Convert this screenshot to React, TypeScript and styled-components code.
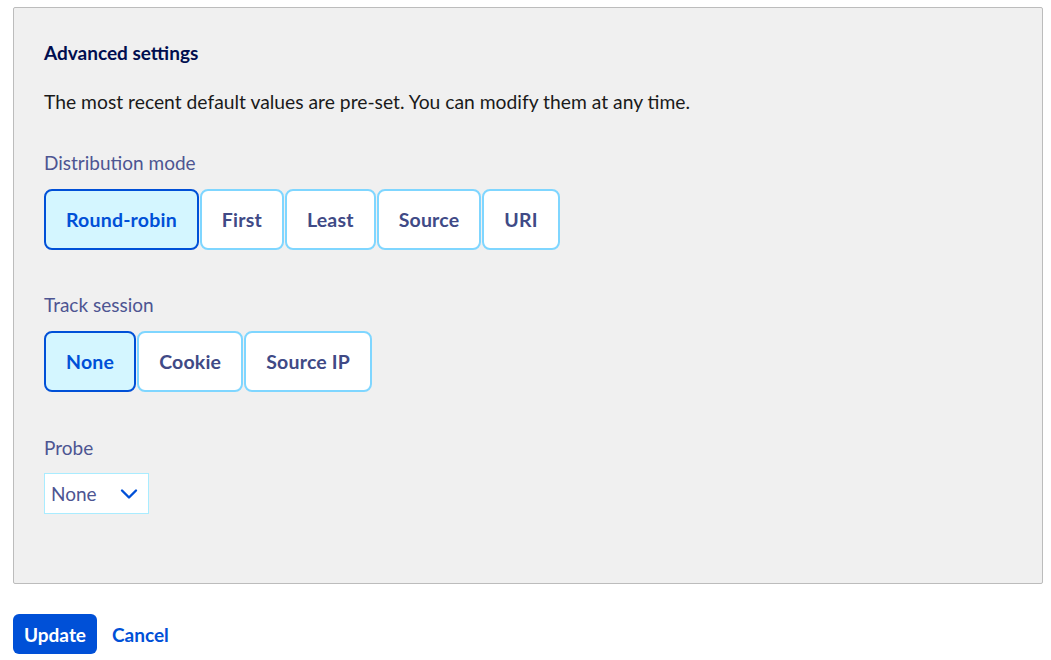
import { useState } from "react"
import styled, { createGlobalStyle } from "styled-components"

const GlobalStyle = createGlobalStyle`
  body {
    margin: 0;
    background: #ffffff;
    font-family: "Lato", "Open Sans", sans-serif;
  }
`

const Page = styled.div`
  padding: 7px 8px 0 13px;
`

const Panel = styled.section`
  background: #f0f0f0;
  border: 1px solid #bcbcbc;
  border-radius: 2px;
  padding: 33px 30px 69px 30px;
`

const Heading = styled.h4`
  margin: 0;
  font-size: 19px;
  line-height: 24px;
  font-weight: 700;
  color: #000e4f;
`

const Intro = styled.p`
  margin: 25px 0 0;
  font-size: 19.3px;
  line-height: 24px;
  color: #1a1a1a;
`

const Label = styled.div<{ $top: number }>`
  margin-top: ${(p) => p.$top}px;
  font-size: 19px;
  line-height: 24px;
  color: #4d5592;
`

const Tiles = styled.div`
  display: flex;
  gap: 1px;
  margin-top: 14px;
`

const Tile = styled.button<{ $active: boolean }>`
  height: 61px;
  padding: 0 20px;
  border-radius: 8px;
  border: 2px solid ${(p) => (p.$active ? "#0050d7" : "#7fd6ff")};
  background: ${(p) => (p.$active ? "#d4f6ff" : "#ffffff")};
  color: ${(p) => (p.$active ? "#0050d7" : "#404a86")};
  font-family: inherit;
  font-size: 19.5px;
  font-weight: 700;
  letter-spacing: 0.2px;
  cursor: pointer;
`

const SelectBox = styled.div`
  margin-top: 13px;
  width: 105px;
  height: 41px;
  box-sizing: border-box;
  border: 1px solid #a9ecff;
  background: #ffffff;
  display: flex;
  align-items: center;
  justify-content: space-between;
  padding: 0 10px 0 6px;
  font-size: 19px;
  color: #4d5592;
`

const Actions = styled.div`
  display: flex;
  align-items: center;
  gap: 15px;
  margin-top: 30px;
`

const Primary = styled.button`
  height: 40px;
  padding: 0 11px;
  border: none;
  border-radius: 6px;
  background: #0050d7;
  color: #ffffff;
  font-family: inherit;
  font-size: 19px;
  font-weight: 700;
`

const Link = styled.button`
  border: none;
  background: none;
  padding: 0;
  color: #0050d7;
  font-family: inherit;
  font-size: 19px;
  font-weight: 700;
`

const modes = ["Round-robin", "First", "Least", "Source", "URI"]
const sessions = ["None", "Cookie", "Source IP"]

const App = () => {
  const [mode, setMode] = useState("Round-robin")
  const [session, setSession] = useState("None")

  return (
    <Page>
      <GlobalStyle />
      <Panel>
        <Heading>Advanced settings</Heading>
        <Intro>The most recent default values are pre-set. You can modify them at any time.</Intro>

        <Label $top={37}>Distribution mode</Label>
        <Tiles>
          {modes.map((m) => (
            <Tile key={m} $active={m === mode} onClick={() => setMode(m)}>
              {m}
            </Tile>
          ))}
        </Tiles>

        <Label $top={43}>Track session</Label>
        <Tiles>
          {sessions.map((s) => (
            <Tile key={s} $active={s === session} onClick={() => setSession(s)}>
              {s}
            </Tile>
          ))}
        </Tiles>

        <Label $top={44}>Probe</Label>
        <SelectBox>
          <span>None</span>
          <svg width="18" height="12" viewBox="0 0 18 12" fill="none">
            <path d="M2 2.5 L9 9.5 L16 2.5" stroke="#0050d7" strokeWidth="2.4" strokeLinecap="round" strokeLinejoin="round" />
          </svg>
        </SelectBox>
      </Panel>
      <Actions>
        <Primary>Update</Primary>
        <Link>Cancel</Link>
      </Actions>
    </Page>
  )
}

export default App
